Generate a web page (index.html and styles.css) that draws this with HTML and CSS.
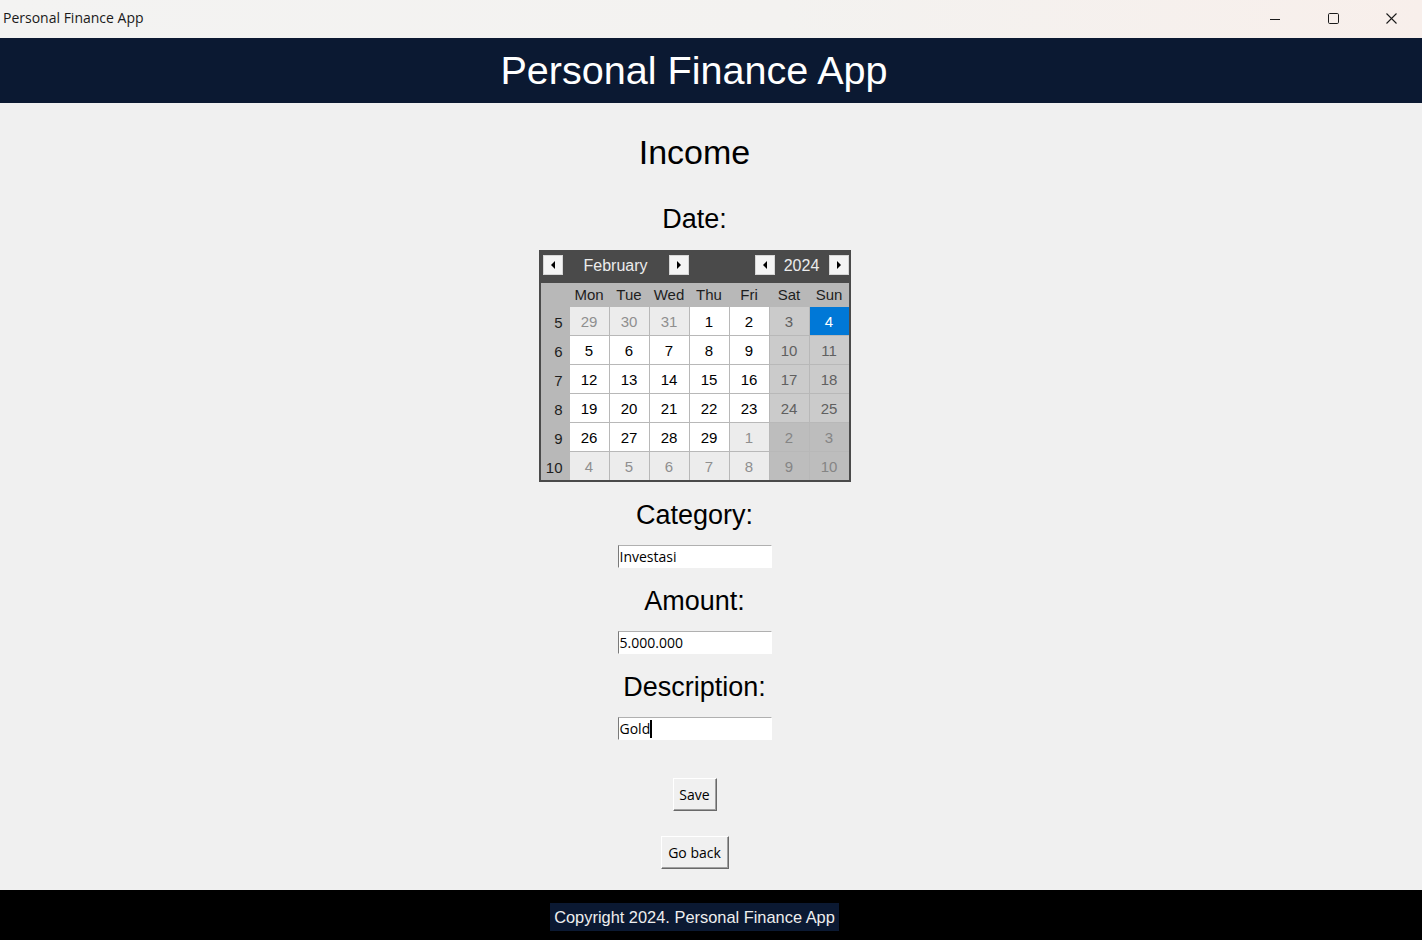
FILE: index.html
```html
<!DOCTYPE html>
<html lang="en">
<head>
<meta charset="utf-8">
<title>Personal Finance App</title>
<link rel="stylesheet" href="styles.css">
</head>
<body>
<div class="titlebar">
  <span class="wintitle">Personal Finance App</span>
  <div class="winctrls">
    <span class="winbtn"><svg width="10" height="10" viewBox="0 0 10 10"><path d="M0 5.5H10" stroke="#1b1b1b" stroke-width="1" fill="none"/></svg></span>
    <span class="winbtn"><svg width="11" height="11" viewBox="0 0 11 11"><rect x="0.5" y="0.5" width="10" height="10" rx="1.2" stroke="#1b1b1b" stroke-width="1" fill="none"/></svg></span>
    <span class="winbtn"><svg width="11" height="11" viewBox="0 0 11 11"><path d="M0.5 0.5L10.5 10.5M10.5 0.5L0.5 10.5" stroke="#1b1b1b" stroke-width="1.1" fill="none"/></svg></span>
  </div>
</div>

<header class="appbar">
  <h1 class="appbar-title">Personal Finance App</h1>
</header>

<main class="content">
  <h2 class="page-title">Income</h2>

  <div class="field-label label-date">Date:</div>
  <div class="cal">
    <div class="cal-head">
      <span class="arrow-btn btn-first"><span class="tri-left"></span></span>
      <span class="cal-month">February</span>
      <span class="arrow-btn"><span class="tri-right"></span></span>
      <span class="cal-spacer"></span>
      <span class="arrow-btn"><span class="tri-left"></span></span>
      <span class="cal-year">2024</span>
      <span class="arrow-btn btn-last"><span class="tri-right"></span></span>
    </div>
    <div class="cal-grid">
      <div class="hd"></div>
      <div class="hd">Mon</div><div class="hd">Tue</div><div class="hd">Wed</div><div class="hd">Thu</div><div class="hd">Fri</div><div class="hd">Sat</div><div class="hd">Sun</div>

      <div class="wk">5</div>
      <div class="d om">29</div><div class="d om">30</div><div class="d om">31</div><div class="d">1</div><div class="d">2</div><div class="d we">3</div><div class="d sel">4</div>

      <div class="wk">6</div>
      <div class="d">5</div><div class="d">6</div><div class="d">7</div><div class="d">8</div><div class="d">9</div><div class="d we">10</div><div class="d we">11</div>

      <div class="wk">7</div>
      <div class="d">12</div><div class="d">13</div><div class="d">14</div><div class="d">15</div><div class="d">16</div><div class="d we">17</div><div class="d we">18</div>

      <div class="wk">8</div>
      <div class="d">19</div><div class="d">20</div><div class="d">21</div><div class="d">22</div><div class="d">23</div><div class="d we">24</div><div class="d we">25</div>

      <div class="wk">9</div>
      <div class="d">26</div><div class="d">27</div><div class="d">28</div><div class="d">29</div><div class="d om">1</div><div class="d omwe">2</div><div class="d omwe">3</div>

      <div class="wk">10</div>
      <div class="d om">4</div><div class="d om">5</div><div class="d om">6</div><div class="d om">7</div><div class="d om">8</div><div class="d omwe">9</div><div class="d omwe">10</div>
    </div>
  </div>

  <div class="field-label">Category:</div>
  <div class="entry">Investasi</div>

  <div class="field-label">Amount:</div>
  <div class="entry">5.000.000</div>

  <div class="field-label">Description:</div>
  <div class="entry">Gold<span class="caret"></span></div>

  <button class="btn btn-save" type="button">Save</button>
  <button class="btn btn-back" type="button">Go back</button>
</main>

<footer class="footer">
  <span class="footer-text">Copyright 2024. Personal Finance App</span>
</footer>
</body>
</html>
```

FILE: styles.css
```css
* { box-sizing: border-box; }

html, body {
  margin: 0;
  padding: 0;
}

body {
  width: 1422px;
  height: 940px;
  overflow: hidden;
  background: #f0f0f0;
  font-family: "Liberation Sans", Arial, sans-serif;
  color: #000;
}

/* ---------- window title bar ---------- */
.titlebar {
  height: 38px;
  display: flex;
  align-items: center;
  justify-content: space-between;
  background: linear-gradient(to right, #f3f3f2 0%, #f3f2f0 55%, #f8efeb 100%);
  padding-left: 3px;
}

.wintitle {
  font-family: "Open Sans", "Noto Sans", sans-serif;
  font-size: 14px;
  color: #1a1a1a;
  padding-bottom: 3px;
}

.winctrls {
  display: flex;
  height: 38px;
  margin-right: 2px;
}

.winbtn {
  width: 58px;
  height: 38px;
  display: flex;
  align-items: center;
  justify-content: center;
  padding-bottom: 1px;
}

/* ---------- app header ---------- */
.appbar {
  height: 65px;
  background: #0b1932;
  padding-right: 34px;
  display: flex;
  justify-content: center;
}

.appbar-title {
  margin: 0;
  font-weight: normal;
  font-size: 39.6px;
  line-height: 65px;
  color: #ffffff;
}

/* ---------- main content ---------- */
.content {
  height: 787px;
  padding: 30px 33px 0 0;
  display: flex;
  flex-direction: column;
  align-items: center;
}

.page-title {
  margin: 0;
  font-weight: normal;
  font-size: 34px;
  line-height: 38px;
}

.field-label {
  font-size: 27px;
  line-height: 31px;
  margin-top: 18px;
}

.label-date {
  margin-top: 33px;
}

/* ---------- calendar ---------- */
.cal {
  margin-top: 15px;
  border: 2px solid #4a4a4a;
  background: #4a4a4a;
  width: 312px;
}

.cal-head {
  height: 31px;
  display: flex;
  align-items: flex-start;
  padding-top: 3px;
}

.arrow-btn {
  width: 20px;
  height: 20px;
  background: #f4f4f4;
  border: 1px solid #d6d6d6;
  display: flex;
  align-items: center;
  justify-content: center;
}

.btn-first { margin-left: 2px; }

.tri-left {
  width: 0;
  height: 0;
  border-top: 4px solid transparent;
  border-bottom: 4px solid transparent;
  border-right: 4px solid #000;
}

.tri-right {
  width: 0;
  height: 0;
  border-top: 4px solid transparent;
  border-bottom: 4px solid transparent;
  border-left: 4px solid #000;
}

.cal-month {
  width: 106px;
  text-align: center;
  font-size: 16px;
  line-height: 21px;
  color: #ececec;
}

.cal-spacer { flex: 1; }

.cal-year {
  width: 54px;
  text-align: center;
  font-size: 16px;
  line-height: 21px;
  color: #ececec;
}

.cal-grid {
  display: grid;
  grid-template-columns: 28px repeat(7, 39px);
  grid-template-rows: 23px repeat(6, 28px);
  gap: 1px;
  background: #b8b8b8;
  width: 308px;
}

.cal-grid > div {
  font-size: 15px;
  display: flex;
  align-items: center;
  justify-content: center;
}

.cal-grid .hd {
  background: #b8b8b8;
  color: #1e1e1e;
}

.cal-grid .wk {
  background: #b8b8b8;
  color: #1e1e1e;
  justify-content: flex-end;
  padding-right: 6px;
  padding-top: 2px;
}

.cal-grid .d {
  background: #ffffff;
  color: #000;
}

.cal-grid .we {
  background: #cbcbcb;
  color: #606060;
}

.cal-grid .om {
  background: #ececec;
  color: #8f8f8f;
}

.cal-grid .omwe {
  background: #bdbdbd;
  color: #858585;
}

.cal-grid .sel {
  background: #0078d7;
  color: #ffffff;
}

/* ---------- entries ---------- */
.entry {
  margin-top: 14px;
  width: 154px;
  height: 23px;
  background: #ffffff;
  border-top: 1px solid #b0b0b0;
  border-left: 1px solid #7a7a7a;
  border-right: 1px solid #ffffff;
  border-bottom: 1px solid #ffffff;
  padding-left: 1px;
  font-family: "Open Sans", "Noto Sans", sans-serif;
  font-size: 14px;
  line-height: 21px;
  color: #000;
  white-space: nowrap;
}

.caret {
  display: inline-block;
  width: 2px;
  height: 18px;
  background: #000;
  vertical-align: -4px;
}

/* ---------- buttons ---------- */
.btn {
  font-family: "Open Sans", "Noto Sans", sans-serif;
  font-size: 14px;
  color: #000;
  background: #f0f0f0;
  height: 33px;
  padding: 0;
  border: 1px solid;
  border-color: #ffffff #696969 #696969 #ffffff;
  box-shadow: inset -1px -1px 0 #a0a0a0;
  border-radius: 0;
  display: flex;
  align-items: center;
  justify-content: center;
}

.btn-save {
  width: 44px;
  margin-top: 38px;
}

.btn-back {
  width: 68px;
  margin-top: 25px;
}

/* ---------- footer ---------- */
.footer {
  height: 50px;
  background: #000000;
  padding: 13px 33px 0 0;
  display: flex;
  justify-content: center;
  align-items: flex-start;
}

.footer-text {
  background: #0b1932;
  color: #eeeeee;
  font-size: 16.4px;
  line-height: 28px;
  padding: 0 4px;
}
```
